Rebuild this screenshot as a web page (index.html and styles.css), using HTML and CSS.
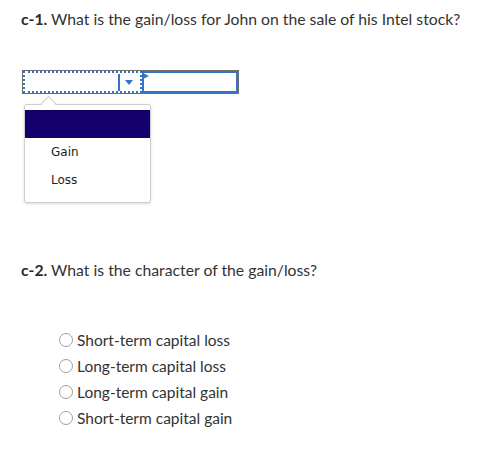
FILE: index.html
```html
<!DOCTYPE html>
<html>
<head>
<meta charset="utf-8">
<link rel="stylesheet" href="styles.css">
</head>
<body>
<div class="page">
  <p class="question"><b>c-1.</b> What is the gain/loss for John on the sale of his Intel stock?</p>
  <div class="field">
    <div class="combo">
      <div class="select">
        <span class="value"></span>
        <span class="divider"></span>
        <span class="arrow"></span>
      </div>
      <div class="input">
        <span class="marker"></span>
      </div>
    </div>
    <div class="popup">
      <div class="opt selected"></div>
      <div class="opt">Gain</div>
      <div class="opt">Loss</div>
    </div>
  </div>
  <p class="question q2"><b>c-2.</b> What is the character of the gain/loss?</p>
  <ul class="radios">
    <li><span class="radio"></span>Short-term capital loss</li>
    <li><span class="radio"></span>Long-term capital loss</li>
    <li><span class="radio"></span>Long-term capital gain</li>
    <li><span class="radio"></span>Short-term capital gain</li>
  </ul>
</div>
</body>
</html>
```
FILE: styles.css
```css
html, body { margin: 0; padding: 0; background: #fff; }
.page {
  padding: 9px 0 0 21px;
  font-family: Lato, "Liberation Sans", sans-serif;
  color: #333;
}
.question {
  margin: 0;
  font-size: 15.75px;
  line-height: 20px;
}
.question b { font-weight: 700; color: #2b2b2b; }
.field { margin-top: 41px; position: relative; height: 190px; }
.combo {
  display: flex;
  width: 215px;
  height: 22px;
  border: 1px solid #6e6e6e;
  margin-left: 1px;
}
.select {
  width: 115px;
  height: 18px;
  border: 2px dotted #3473c5;
  display: flex;
  align-items: stretch;
  position: relative;
}
.value { flex: 1; }
.divider { width: 2px; background: #3473c5; margin: 1px 0 0; height: 17px; }
.arrow {
  width: 20px;
  position: relative;
}
.arrow::after {
  content: "";
  position: absolute;
  left: 5px;
  top: 7px;
  border-left: 4px solid transparent;
  border-right: 4px solid transparent;
  border-top: 5px solid #3473c5;
}
.input {
  flex: 1;
  border: 2px solid #3473c5;
  position: relative;
}
.marker {
  position: absolute;
  left: -1px;
  top: 0;
  border-top: 3px solid transparent;
  border-bottom: 3px solid transparent;
  border-left: 6px solid #3473c5;
}
.popup {
  position: absolute;
  left: 3px;
  top: 34px;
  width: 125px;
  padding: 5px 0 8px;
  border: 1px solid #cfcfcf;
  border-radius: 3px;
  background: #fff;
  box-shadow: 0 1px 3px rgba(0,0,0,0.15);
  font-family: "DejaVu Sans", Verdana, sans-serif;
  font-size: 12px;
  color: #222;
}
.popup::before {
  content: "";
  position: absolute;
  left: 18px;
  top: -7px;
  width: 10px;
  height: 10px;
  background: #fff;
  border-left: 1px solid #cfcfcf;
  border-top: 1px solid #cfcfcf;
  transform: rotate(45deg);
}
.opt {
  height: 28px;
  line-height: 28px;
  padding-left: 26px;
  position: relative;
}
.opt.selected { background: #13006c; }
.q2 { margin-top: 0; }
.radios {
  list-style: none;
  margin: 47px 0 0;
  padding: 0 0 0 38px;
  font-size: 15.5px;
}
.radios li {
  height: 26px;
  display: flex;
  align-items: center;
}
.radio {
  width: 12px;
  height: 12px;
  border: 1px solid #a0a0a0;
  border-radius: 50%;
  margin-right: 4px;
  box-sizing: content-box;
}
```
